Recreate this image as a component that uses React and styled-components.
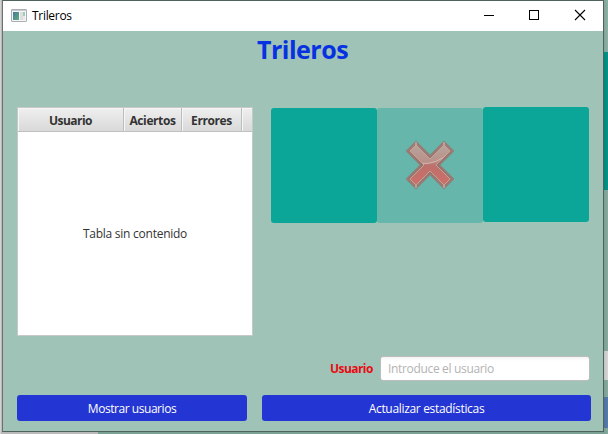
import React from "react";
import styled, { createGlobalStyle } from "styled-components";

const GlobalStyle = createGlobalStyle`
  * { box-sizing: border-box; }
  body { margin: 0; overflow: hidden; font-family: "Open Sans", "Noto Sans", sans-serif; font-size: 12px; }
`;

const Desktop = styled.div`
  position: relative;
  width: 608px;
  height: 434px;
  padding: 0 4px 2px 2px;
  background: linear-gradient(90deg, #d2d2d2 0 1px, #bababa 1px 98px, #7ba195 98px);
  overflow: hidden;
`;

const RightEdge = styled.div`
  position: absolute;
  top: 0;
  right: 0;
  width: 4px;
  height: 434px;
  background:
    linear-gradient(90deg, rgba(0, 0, 0, 0.08), transparent),
    linear-gradient(#8db1a6 0 52px, #029487 52px 190px, #87aba0 190px 351px,
      #d5d5d5 351px 380px, #87aba0 380px 397px, #557aaa 397px 428px, #87aba0 428px);
`;

const Window = styled.main`
  position: relative;
  display: flex;
  flex-direction: column;
  width: 602px;
  height: 432px;
  border: 1px solid #4f625c;
  border-left-color: #6c716f;
  background: #9fc3b6;
`;

const TitleBar = styled.header`
  display: flex;
  align-items: center;
  height: 30px;
  flex: none;
  padding-left: 8px;
  background: #fff;
  color: #000;
`;

const WindowName = styled.span`
  flex: 1;
  margin-left: 5px;
  font-size: 12px;
  line-height: 16px;
  letter-spacing: ${(p) => p.$track || 0}px;
`;

const Controls = styled.div`
  display: flex;
  svg { display: block; }
`;

const Content = styled.div`
  display: flex;
  flex-direction: column;
  flex: 1;
  padding: 0 11px 10px 14px;
`;

const Heading = styled.h1`
  height: 76px;
  margin: 0;
  padding: 0 4px 0 0;
  color: #0632e1;
  font-size: 25px;
  line-height: 36px;
  font-weight: 700;
  text-align: center;
  letter-spacing: ${(p) => p.$track || 0}px;
`;

const Middle = styled.div`
  display: flex;
  gap: 18px;
  height: 229px;
`;

const Table = styled.section`
  display: flex;
  flex-direction: column;
  width: 236px;
  border: 1px solid #c8c8c8;
  background: #fff;
`;

const TableHead = styled.div`
  display: grid;
  grid-template-columns: 106px 58px 60px 10px;
  height: 24px;
  border-bottom: 1px solid #c0c0c0;
  background: linear-gradient(#efefef, #d9d9d9);
`;

const HeadCell = styled.div`
  height: 23px;
  border-right: ${(p) => (p.$last ? "0" : "1px solid #bdbdbd")};
  box-shadow: inset 1px 1px #f6f6f6;
  color: #333;
  font-size: 12px;
  font-weight: 700;
  line-height: 25px;
  text-align: center;
  white-space: nowrap;
  letter-spacing: ${(p) => p.$track || 0}px;
`;

const Placeholder = styled.div`
  display: flex;
  flex: 1;
  align-items: center;
  justify-content: center;
  color: #333;
  letter-spacing: ${(p) => p.$track || 0}px;
`;

const Cups = styled.div`
  display: grid;
  grid-template-columns: 106px 106px 106px;
  height: 116px;
  padding-top: 1px;
`;

const Cup = styled.div`
  display: flex;
  justify-content: center;
  padding-top: 32px;
  border-radius: 3px;
  background: ${(p) => (p.$revealed ? "#66b6ab" : "#0ca699")};
  margin: ${(p) => (p.$raised ? "-1px 0 1px" : "0")};
`;

const UserRow = styled.div`
  display: flex;
  justify-content: flex-end;
  height: 25px;
  margin: 20px 2px 14px 0;
`;

const UserLabel = styled.label`
  width: 50px;
  color: #e70b14;
  font-weight: 700;
  line-height: 26px;
  letter-spacing: ${(p) => p.$track || 0}px;
`;

const Field = styled.input`
  width: 210px;
  height: 25px;
  padding: 0 7px;
  border: 1px solid #bdbdbd;
  border-radius: 3px;
  outline: 0;
  background: linear-gradient(#f4f4f4, #fff 4px);
  font: 12px "Open Sans", sans-serif;
  letter-spacing: ${(p) => p.$track || 0}px;
  &::placeholder { color: #b3b3b3; opacity: 1; }
`;

const Actions = styled.div`
  display: grid;
  grid-template-columns: 230px 329px;
  gap: 15px;
`;

const Button = styled.button`
  height: 26px;
  padding: 1px 0 0;
  border: 0;
  border-radius: 3px;
  background: #2335d3;
  color: #fff;
  font: 12px/25px "Open Sans", sans-serif;
  letter-spacing: ${(p) => p.$track || 0}px;
`;

const AppIcon = () => (
  <svg width="16" height="14" viewBox="0 0 16 14">
    <defs>
      <linearGradient id="pane" x1="0" y1="0" x2="1" y2="1">
        <stop stopColor="#4a789e" />
        <stop offset="1" stopColor="#5dae7b" />
      </linearGradient>
    </defs>
    <rect x="0.5" y="0.5" width="15" height="12" rx="0.5" fill="#f6f6f6" stroke="#a9afb5" />
    <path d="M1 1.500h14" stroke="#c5cbd1" />
    <rect x="2" y="3" width="6" height="8" fill="url(#pane)" />
    <rect x="9" y="3" width="3" height="8" fill="#dedede" />
    <rect x="12" y="3" width="2" height="4" fill="#9fceb5" />
    <rect x="12" y="7" width="2" height="4" fill="#e8e8e8" />
  </svg>
);

const CROSS =
  "M416 141.500L430 155.500L444 141.500L453.500 151L439.500 165L453.500 179L444 188.500L430 174.500L416 188.500L406.500 179L420.500 165L406.500 151Z";
const CROSS_INNER =
  "M416 145L430 159L444 145L450 151L436 165L450 179L444 185L430 171L416 185L410 179L424 165L410 151Z";

const CrossIcon = () => (
  <svg width="50" height="50" viewBox="405 140 50 50">
    <defs>
      <linearGradient id="rim" x1="0" y1="0" x2="0" y2="1">
        <stop stopColor="#a87e76" />
        <stop offset="0.5" stopColor="#9d6e67" />
        <stop offset="1" stopColor="#a27a72" />
      </linearGradient>
      <linearGradient id="face" x1="0" y1="0" x2="0" y2="1">
        <stop stopColor="#b39d96" />
        <stop offset="0.43" stopColor="#b8837c" />
        <stop offset="0.52" stopColor="#bd706b" />
        <stop offset="1" stopColor="#cf6e69" />
      </linearGradient>
      <clipPath id="cross"><path d={CROSS_INNER} /></clipPath>
    </defs>
    <path d={CROSS} fill="url(#rim)" stroke="#8f807a" strokeWidth="1.200" strokeLinejoin="round" />
    <path d={CROSS_INNER} fill="url(#face)" stroke="#bda598" strokeWidth="1" />
    <g clipPath="url(#cross)">
      <path d="M408 140H452V151Q443 163 423 164H408Z" fill="#c4c0b8" opacity="0.22" />
      <path d="M420 163.500Q437 165 450 152" fill="none" stroke="#d5b6ac" strokeWidth="1" />
    </g>
    <path d="M416 142v3M444 142v3M416 185v3M444 185v3" stroke="#c1aaa2" strokeWidth="1.500" />
  </svg>
);

export default function App() {
  return (
    <>
      <GlobalStyle />
      <Desktop>
        <RightEdge />
        <Window>
          <TitleBar>
            <AppIcon />
            <WindowName $track={-0.3}>Trileros</WindowName>
            <Controls>
              <svg width="135" height="30" viewBox="0 0 135 30" fill="none" stroke="#000" shapeRendering="crispEdges">
                <path d="M16 14.500h10" />
                <rect x="61.500" y="9.500" width="9" height="9" />
                <path d="M107 9L117 19M117 9L107 19" shapeRendering="auto" strokeWidth="1.100" />
              </svg>
            </Controls>
          </TitleBar>
          <Content>
            <Heading $track={-0.5}>Trileros</Heading>
            <Middle>
              <Table>
                <TableHead>
                  <HeadCell $track={-0.55}>Usuario</HeadCell>
                  <HeadCell $track={-0.4}>Aciertos</HeadCell>
                  <HeadCell $track={-0.4}>Errores</HeadCell>
                  <HeadCell $last />
                </TableHead>
                <Placeholder $track={-0.25}>Tabla sin contenido</Placeholder>
              </Table>
              <Cups>
                <Cup />
                <Cup $revealed><CrossIcon /></Cup>
                <Cup $raised />
              </Cups>
            </Middle>
            <UserRow>
              <UserLabel htmlFor="user" $track={-0.55}>Usuario</UserLabel>
              <Field id="user" placeholder="Introduce el usuario" $track={-0.33} />
            </UserRow>
            <Actions>
              <Button $track={-0.45}>Mostrar usuarios</Button>
              <Button $track={-0.32}>Actualizar estadísticas</Button>
            </Actions>
          </Content>
        </Window>
      </Desktop>
    </>
  );
}
